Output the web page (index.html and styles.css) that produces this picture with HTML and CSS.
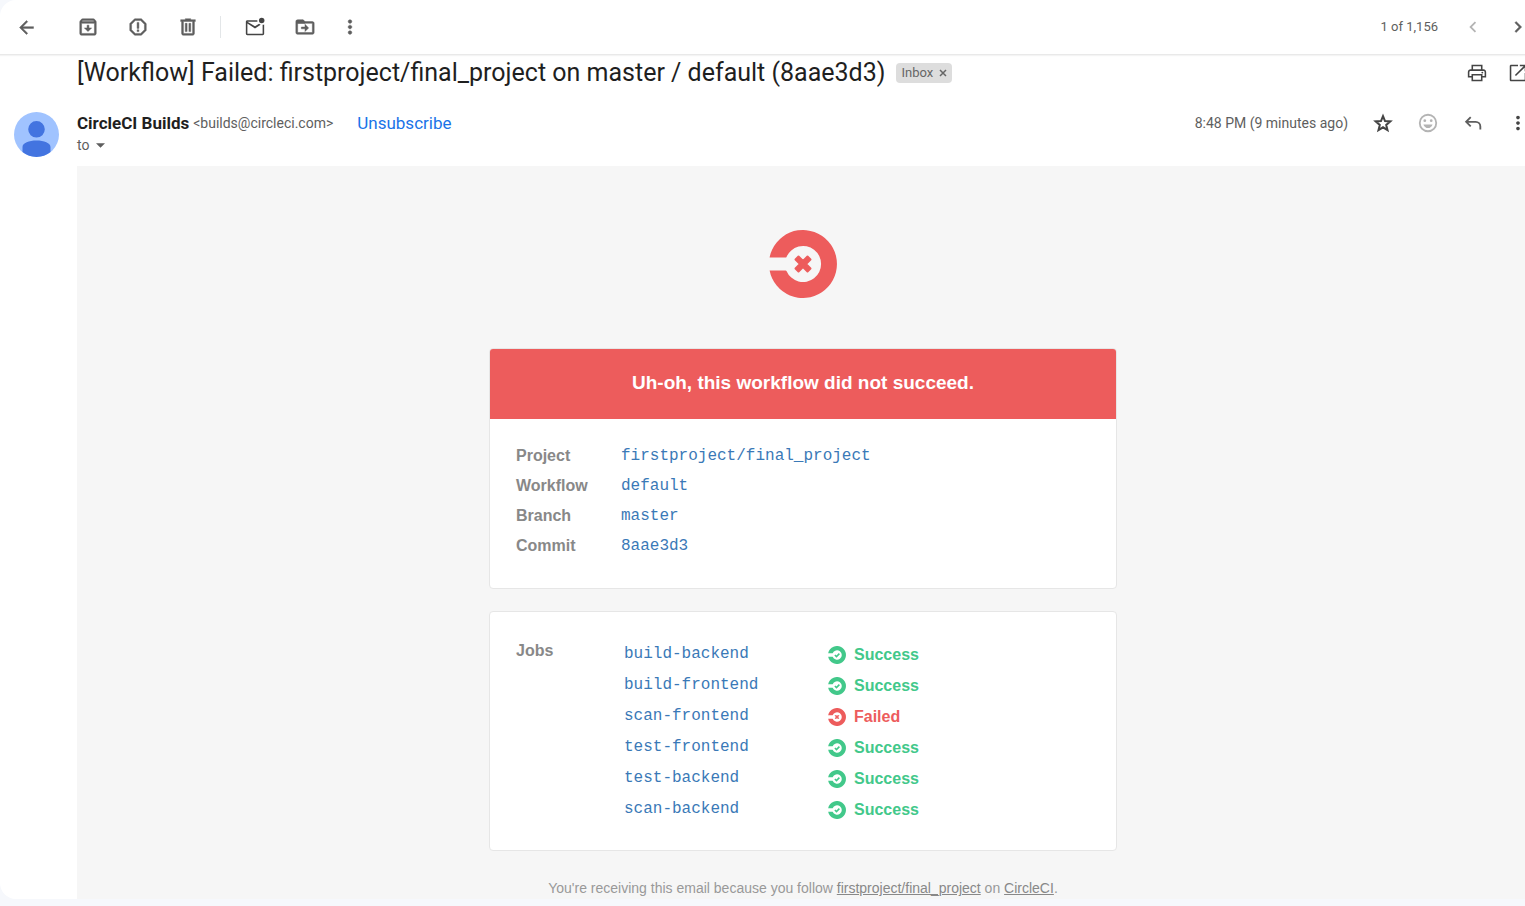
FILE: index.html
```html
<!DOCTYPE html>
<html lang="en">
<head>
<meta charset="utf-8">
<meta name="viewport" content="width=device-width, initial-scale=1">
<title>[Workflow] Failed: firstproject/final_project on master / default (8aae3d3)</title>
<link rel="stylesheet" href="styles.css">
</head>
<body>
<svg class="sprite" aria-hidden="true">
  <symbol id="ring" viewBox="0 0 68 68">
    <path d="M.6 27.4A34 34 0 1 1 .6 40.6Q.6 40.4 1 40.4H16.6Q17.2 40.4 17.5 41A18 18 0 1 0 17.5 27Q17.2 27.6 16.6 27.6H1Q.6 27.6 .6 27.4Z"/>
  </symbol>
  <symbol id="failed" viewBox="0 0 68 68">
    <use href="#ring"/>
    <path d="M29.500 26.500 34 31 38.500 26.500 41.500 29.500 37 34 41.500 38.500 38.500 41.500 34 37 29.500 41.500 26.500 38.500 31 34 26.500 29.500Z" stroke="currentColor" stroke-width="2" stroke-linejoin="round"/>
  </symbol>
  <symbol id="success" viewBox="0 0 68 68">
    <use href="#ring"/>
    <path d="M26 34l6 6 11-11" fill="none" stroke="currentColor" stroke-width="6"/>
  </symbol>
  <symbol id="more" viewBox="0 0 24 24">
    <path d="M12 8c1.1 0 2-.9 2-2s-.9-2-2-2-2 .9-2 2 .9 2 2 2zm0 2c-1.1 0-2 .9-2 2s.9 2 2 2 2-.9 2-2-.9-2-2-2zm0 6c-1.1 0-2 .9-2 2s.9 2 2 2 2-.9 2-2-.9-2-2-2z"/>
  </symbol>
</svg>
<main class="mail">
  <header class="toolbar">
    <button class="icon-button back" aria-label="Back"><svg viewBox="0 0 24 24"><path d="M20 11H7.800l5.600-5.600L12 4l-8 8 8 8 1.400-1.400L7.800 13H20v-2z"/></svg></button>
    <button class="icon-button wide" aria-label="Archive"><svg viewBox="0 0 24 24"><path d="M20.540 5.230l-1.390-1.680C18.880 3.210 18.470 3 18 3H6c-.47 0-.88.210-1.160.550L3.460 5.230C3.170 5.570 3 6.020 3 6.500V19c0 1.100.9 2 2 2h14c1.100 0 2-.9 2-2V6.500c0-.48-.17-.93-.46-1.270zM6.240 5h11.520l.83 1H5.420l.82-1zM5 19V8h14v11H5zm8-9h-2v3H8l4 4 4-4h-3v-3z"/></svg></button>
    <button class="icon-button wide" aria-label="Report spam"><svg viewBox="0 0 24 24"><path d="M15.700 3H8.300L3 8.300v7.400L8.300 21h7.400l5.300-5.300V8.300L15.700 3zM19 14.900L14.900 19H9.100L5 14.900V9.100L9.100 5h5.800L19 9.100v5.800zM11 7h2v6.500h-2zM11 15h2v2h-2z"/></svg></button>
    <button class="icon-button wide" aria-label="Delete"><svg viewBox="0 0 24 24"><path d="M15 4V3H9v1H4v2h1v13c0 1.100.9 2 2 2h10c1.100 0 2-.9 2-2V6h1V4h-5zm2 15H7V6h10v13zM9 8h2v9H9zm4 0h2v9h-2z"/></svg></button>
    <span class="divider"></span>
    <button class="icon-button wide strong" aria-label="Mark as unread"><svg viewBox="0 0 24 24"><path d="M14.600 4.500H3.600C2.700 4.500 2 5.200 2 6.100V19.400C2 20.300 2.700 21 3.600 21H20.400C21.300 21 22 20.300 22 19.400V9.300C21.500 9.500 21 9.600 20.300 9.500V19.300H3.700V8.200L12 13.500 18.200 9.500C17.500 9.200 16.900 8.900 16.400 8.500L12 11.300 3.700 6.200H14.700C14.500 5.600 14.500 5 14.600 4.500Z"/><circle cx="19.300" cy="4.900" r="3"/></svg></button>
    <button class="icon-button wide" aria-label="Move to"><svg viewBox="0 0 24 24"><path d="M20 6h-8l-2-2H4c-1.100 0-2 .9-2 2v12c0 1.100.9 2 2 2h16c1.100 0 2-.9 2-2V8c0-1.100-.9-2-2-2zm0 12H4V8h16v10zm-8-1 4-4-4-4v3H8v2h4v3z"/><path d="M3 5h7l2 2v1H3z"/></svg></button>
    <button class="icon-button narrow" aria-label="More"><svg><use href="#more"/></svg></button>
    <span class="count">1 of 1,156</span>
    <div class="actions">
      <button class="icon-button faded" aria-label="Newer" disabled><svg viewBox="0 0 24 24"><path d="M15.400 7.400 14 6l-6 6 6 6 1.400-1.400L10.800 12z"/></svg></button>
      <button class="icon-button" aria-label="Older"><svg viewBox="0 0 24 24"><path d="M10 6 8.600 7.400l4.600 4.600-4.600 4.600L10 18l6-6z"/></svg></button>
    </div>
  </header>

  <div class="subject-row">
    <h1>[Workflow] Failed: firstproject/final_project on master / default (8aae3d3)</h1>
    <span class="label">Inbox <button class="label-remove" aria-label="Remove label Inbox"><svg viewBox="0 0 8 8"><path d="M1 1l6 6M7 1 1 7"/></svg></button></span>
    <div class="actions">
      <button class="icon-button tight strong" aria-label="Print"><svg viewBox="0 0 24 24"><path d="M19 8h-1V3H6v5H5c-1.660 0-3 1.340-3 3v6h4v4h12v-4h4v-6c0-1.660-1.340-3-3-3zM7.700 4.700h8.600V8H7.700V4.700zm8.600 14.600H7.700v-4.600h8.600v4.600zm1.700-4V13H6v2.300H3.700V11c0-.7.6-1.300 1.300-1.300h14c.7 0 1.300.6 1.300 1.300v4.300H18z"/><circle cx="17.800" cy="11.500" r="1"/></svg></button>
      <button class="icon-button tight strong" aria-label="Open in new window"><svg viewBox="0 0 24 24"><path d="M19.300 19.300H4.700V4.700H12V3H4.500C3.700 3 3 3.700 3 4.500v15c0 .8.700 1.500 1.500 1.500h15c.8 0 1.500-.7 1.500-1.500V12h-1.700v7.300zM14 3v1.700h4.100L8.600 14.200l1.200 1.200 9.500-9.500V10H21V3h-7z"/></svg></button>
    </div>
  </div>

  <div class="sender-row">
    <svg class="avatar" viewBox="0 0 45 45" role="img" aria-label="CircleCI Builds"><circle class="avatar-back" cx="22.500" cy="22.500" r="22.500"/><path class="avatar-person" d="M22.500 9a8.300 8.300 0 1 1 0 16.600 8.300 8.300 0 0 1 0-16.600zM8.500 40V35C8.500 31 15 28.500 22.500 28.500S36.500 31 36.500 35V40A22.500 22.500 0 0 1 8.500 40z"/></svg>
    <div class="sender">
      <div class="sender-line"><strong>CircleCI Builds</strong><span class="address">&lt;builds@circleci.com&gt;</span><a class="unsubscribe" href="#">Unsubscribe</a></div>
      <div class="recipient">to <button class="details" aria-label="Show details"><svg viewBox="0 0 10 5"><path d="M0 0h10L5 5z"/></svg></button></div>
    </div>
    <span class="time">8:48 PM (9 minutes ago)</span>
    <div class="actions">
      <button class="icon-button strong" aria-label="Star"><svg viewBox="0 0 24 24"><path d="M12 4.500 14.200 9.900 20 10.300 15.500 14.100 16.900 19.800 12 16.700 7.100 19.800 8.500 14.100 4 10.300 9.800 9.900Z" fill="none" stroke="currentColor" stroke-width="2.200"/></svg></button>
      <button class="icon-button faded" aria-label="Add reaction"><svg viewBox="0 0 24 24"><path fill-rule="evenodd" d="M12 2a10 10 0 1 0 0 20 10 10 0 0 0 0-20zm0 2a8 8 0 1 1 0 16 8 8 0 0 1 0-16z"/><circle cx="8.500" cy="9.500" r="1.500"/><circle cx="15.500" cy="9.500" r="1.500"/><path d="M7 13.500h10c-.8 2.300-2.700 4-5 4s-4.200-1.700-5-4z"/></svg></button>
      <button class="icon-button" aria-label="Reply"><svg viewBox="0 0 24 24"><path d="M9.500 5.500 4.500 10.700l5 5M4.500 10.700H15a5 5 0 0 1 5 5V19" fill="none" stroke="currentColor" stroke-width="2"/></svg></button>
      <button class="icon-button strong" aria-label="More"><svg><use href="#more"/></svg></button>
    </div>
  </div>

  <article class="message">
    <svg class="logo red" role="img" aria-label="CircleCI"><use href="#failed"/></svg>
    <section class="card">
      <h2>Uh-oh, this workflow did not succeed.</h2>
      <table class="summary">
        <tr><th scope="row">Project</th><td><a href="#">firstproject/final_project</a></td></tr>
        <tr><th scope="row">Workflow</th><td><a href="#">default</a></td></tr>
        <tr><th scope="row">Branch</th><td><a href="#">master</a></td></tr>
        <tr><th scope="row">Commit</th><td><a href="#">8aae3d3</a></td></tr>
      </table>
    </section>
    <section class="card jobs">
      <h3>Jobs</h3>
      <table class="job-list">
        <tr><td><a href="#">build-backend</a></td><td><span class="status green"><svg><use href="#success"/></svg>Success</span></td></tr>
        <tr><td><a href="#">build-frontend</a></td><td><span class="status green"><svg><use href="#success"/></svg>Success</span></td></tr>
        <tr><td><a href="#">scan-frontend</a></td><td><span class="status red"><svg><use href="#failed"/></svg>Failed</span></td></tr>
        <tr><td><a href="#">test-frontend</a></td><td><span class="status green"><svg><use href="#success"/></svg>Success</span></td></tr>
        <tr><td><a href="#">test-backend</a></td><td><span class="status green"><svg><use href="#success"/></svg>Success</span></td></tr>
        <tr><td><a href="#">scan-backend</a></td><td><span class="status green"><svg><use href="#success"/></svg>Success</span></td></tr>
      </table>
    </section>
    <p class="notice">You're receiving this email because you follow <a href="#">firstproject/final_project</a> on <a href="#">CircleCI</a>.</p>
  </article>
</main>
</body>
</html>
```

FILE: styles.css
```css
* { box-sizing: border-box; }
body {
  margin: 0;
  min-height: 100vh;
  display: flex;
  flex-direction: column;
  background: #f6f8fc;
  color: #1f1f1f;
  font-family: Roboto, "Liberation Sans", sans-serif;
  font-size: 14px;
  line-height: 20px;
}
button { border: 0; padding: 0; background: none; color: inherit; font: inherit; cursor: pointer; }
a { text-decoration: none; }
.sprite { display: none; }
.mail {
  flex: 1;
  display: flex;
  flex-direction: column;
  margin-bottom: 7px;
  background: #fff;
  border-radius: 16px 0 0 16px;
  overflow: hidden;
}
.toolbar {
  display: flex;
  align-items: center;
  height: 55px;
  padding-left: 4px;
  border-bottom: 1px solid #e9e9e9;
  box-shadow: 0 1px 1px #f4f4f4;
  flex-shrink: 0;
}
.icon-button {
  display: flex;
  align-items: center;
  justify-content: center;
  width: 45px;
  height: 36px;
  color: #5e5e5e;
}
.icon-button svg { width: 22px; height: 22px; fill: currentColor; }
.icon-button.back { width: 44px; margin-right: 15px; }
.icon-button.back svg { width: 21px; height: 21px; }
.toolbar .icon-button:not(.strong):not(.faded) svg { stroke: currentColor; stroke-width: .5px; }
.icon-button.wide { width: 50px; }
.icon-button.narrow { width: 40px; }
.icon-button.tight { width: 41px; }
.icon-button.strong { color: #444; }
.icon-button.faded { color: #b4b4b4; }
.divider { width: 1px; height: 22px; margin: 0 9px 0 7px; background: #e3e6e8; }
.count { margin-left: auto; margin-right: 12px; color: #5e5e5e; font-size: 13px; }
.actions { display: flex; margin-right: -15px; flex-shrink: 0; }

.subject-row { display: flex; align-items: center; height: 36px; padding-left: 77px; }
h1 { margin: 0; font-size: 25px; line-height: 32px; font-weight: 400; }
.label {
  display: flex;
  align-items: center;
  gap: 6px;
  height: 20px;
  margin-left: 11px;
  padding: 0 5px;
  border-radius: 4px;
  background: #ddd;
  color: #666;
  font-size: 13px;
}
.label-remove { display: flex; }
.label-remove svg { width: 8px; height: 8px; stroke: #666; stroke-width: 1.5px; fill: none; }
.subject-row .actions { margin-left: auto; margin-right: -13px; }

.sender-row { display: flex; align-items: flex-start; height: 75px; padding: 21px 0 0 14px; }
.avatar { width: 45px; height: 45px; margin-right: 18px; }
.avatar-back { fill: #a0c3ff; }
.avatar-person { fill: #4374e0; }
.sender { flex: 1; }
.sender-line { display: flex; align-items: center; height: 22px; }
.sender-line strong { font-size: 17px; font-weight: 700; }
.address { margin-left: 4px; color: #5e5e5e; }
.unsubscribe { margin-left: 24px; color: #1a73e8; font-size: 17px; font-weight: 400; }
.recipient { display: flex; align-items: center; gap: 7px; height: 22px; color: #5e5e5e; }
.details { display: flex; }
.details svg { width: 9px; height: 5px; fill: #5e5e5e; }
.time { margin-right: 12px; line-height: 22px; color: #5e5e5e; }
.sender-row .actions { margin-top: -7px; }

.message {
  flex: 1;
  display: flex;
  flex-direction: column;
  align-items: center;
  margin-left: 77px;
  margin-right: -4px;
  padding-top: 64px;
  background: #f6f6f6;
  font-family: "Liberation Sans", Arial, sans-serif;
}
.logo { width: 68px; height: 68px; margin-bottom: 50px; fill: currentColor; flex-shrink: 0; }
.red { color: #ed5c5c; }
.green { color: #42c88a; }
.card {
  width: 100%;
  max-width: 628px;
  margin-bottom: 22px;
  border: 1px solid #e6e6e6;
  border-radius: 4px;
  background: #fff;
  overflow: hidden;
  flex-shrink: 0;
}
.card h2 {
  margin: 0;
  padding: 22px 0 24px;
  background: #ed5c5c;
  color: #fff;
  font-size: 19px;
  line-height: 24px;
  text-align: center;
}
.card table { border-collapse: collapse; font-size: 16px; }
.card th, .card td { padding: 0; text-align: left; vertical-align: top; }
.card td a { color: #3a79b7; font-family: "Liberation Mono", "Courier New", monospace; }
.summary { margin: 22px 26px 27px; line-height: 30px; }
.summary th { width: 105px; color: #888; }
.summary td { line-height: 28px; }
.jobs { display: flex; padding: 27px 26px 25px; }
.card h3 { width: 108px; margin: 0; color: #888; font-size: 16px; line-height: 24px; }
.job-list td { height: 31px; line-height: 28px; }
.job-list td:first-child { width: 204px; }
.status { display: flex; align-items: center; gap: 8px; height: 31px; font-weight: 700; }
.status svg { width: 18px; height: 18px; fill: currentColor; }
.notice { margin: 5px 0 0; color: #999; font-size: 14px; line-height: 20px; }
.notice a { color: #888; text-decoration: underline; }
```
